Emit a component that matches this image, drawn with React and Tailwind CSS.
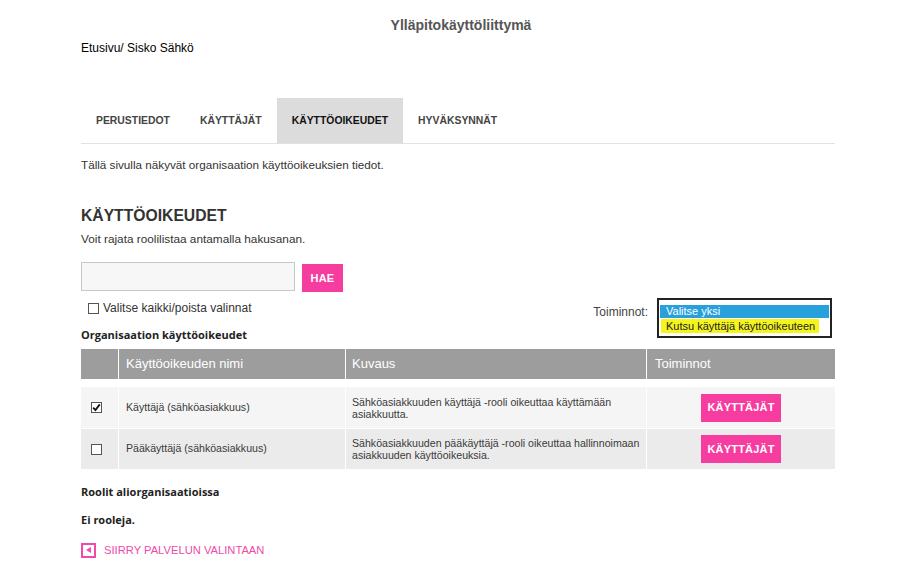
import React from "react";

const arial = { fontFamily: '"Liberation Sans", Arial, sans-serif' };
const open = { fontFamily: '"Open Sans", sans-serif' };

function PinkButton({ children, className = "" }) {
  return (
    <button
      className={`bg-[#f73c9f] text-white font-bold text-[11px] tracking-[0.2px] border-0 ${className}`}
    >
      {children}
    </button>
  );
}

function Checkbox({ checked }) {
  return (
    <span className="inline-flex w-[11px] h-[11px] border border-[#555] bg-white items-center justify-center">
      {checked && (
        <svg width="9" height="9" viewBox="0 0 9 9">
          <path d="M1.2 4.6 L3.4 7 L7.8 1.4" stroke="#111" strokeWidth="1.8" fill="none" />
        </svg>
      )}
    </span>
  );
}

export default function App() {
  const rows = [
    {
      checked: true,
      name: "Käyttäjä (sähköasiakkuus)",
      desc: ["Sähköasiakkuuden käyttäjä -rooli oikeuttaa käyttämään", "asiakkuutta."],
      bg: "bg-[#f5f5f5]",
    },
    {
      checked: false,
      name: "Pääkäyttäjä (sähköasiakkuus)",
      desc: ["Sähköasiakkuuden pääkäyttäjä -rooli oikeuttaa hallinnoimaan", "asiakkuuden käyttöoikeuksia."],
      bg: "bg-[#ebebeb]",
    },
  ];
  return (
    <div className="w-[900px] h-[566px] bg-white text-[#333] overflow-hidden" style={arial}>
      <div className="pl-[81px] pr-[65px]">
        <div className="text-center pt-[17px] text-[14px] font-bold text-[#555] leading-[16px]">
          <span className="relative left-[3px]">Ylläpitokäyttöliittymä</span>
        </div>
        <div className="mt-[8px] text-[12px] text-black leading-[14px]">Etusivu/ Sisko Sähkö</div>

        <div className="mt-[43px] flex border-b border-[#e2e2e2] h-[46px]">
          {["PERUSTIEDOT", "KÄYTTÄJÄT", "KÄYTTÖOIKEUDET", "HYVÄKSYNNÄT"].map((t, i) => (
            <div
              key={t}
              className={`px-[15px] flex items-center text-[10.4px] font-bold ${
                i === 2 ? "bg-[#dcdcdc] text-[#111]" : "text-[#444]"
              }`}
            >
              {t}
            </div>
          ))}
        </div>

        <div className="mt-[14px] text-[11.7px] leading-[14px] text-[#333]">
          Tällä sivulla näkyvät organisaation käyttöoikeuksien tiedot.
        </div>

        <h1 className="mt-[34px] text-[15.7px] font-bold text-[#333] leading-[20px]">KÄYTTÖOIKEUDET</h1>
        <div className="mt-[6px] text-[11.8px] leading-[14px] text-[#333]">Voit rajata roolilistaa antamalla hakusanan.</div>

        <div className="mt-[16px] flex items-start gap-[7px]">
          <input className="w-[214px] h-[29px] border border-[#c8c8c8] bg-[#f7f7f7] outline-none" />
          <PinkButton className="w-[41px] h-[28px] mt-[2px]">HAE</PinkButton>
        </div>

        <div className="flex justify-between items-start">
          <div className="mt-[9px] ml-[7px] flex items-center gap-[4px] text-[12px] leading-[14px] text-[#333]">
            <Checkbox />
            <span>Valitse kaikki/poista valinnat</span>
          </div>
          <div className="flex items-start mt-[6px] mr-[3px]">
            <span className="text-[12px] text-[#444] mt-[7px] mr-[9px] leading-[14px]">Toiminnot:</span>
            <div className="w-[175px] h-[40px] border-2 border-[#222] bg-white pt-[5px] px-[1px] text-[11px] leading-[13px] whitespace-nowrap">
              <div className="bg-[#27a0dc] text-white pl-[6px]">Valitse yksi</div>
              <div className="mt-[1px] ml-[1px] inline-block bg-[#f5f51e] text-[#222] pl-[5px] pr-[4px] leading-[14px]">
                Kutsu käyttäjä käyttöoikeuteen
              </div>
            </div>
          </div>
        </div>

        <div className="mt-[-10px] text-[11px] font-bold leading-[14px] text-[#222]" style={open}>
          Organisaation käyttöoikeudet
        </div>

        <div className="mt-[7px] w-[754px] text-[13px]">
          <div className="flex h-[30px] bg-[#9d9d9d] text-white">
            <div className="w-[38px] border-r border-white"></div>
            <div className="w-[227px] border-r border-white flex items-center pl-[7px]">Käyttöoikeuden nimi</div>
            <div className="w-[301px] border-r border-white flex items-center pl-[6px]">Kuvaus</div>
            <div className="flex-1 flex items-center pl-[8px]">Toiminnot</div>
          </div>
          <div className="mt-[8px]">
            {rows.map((r, i) => (
              <div key={i} className={`flex h-[41px] ${r.bg} ${i === 1 ? "border-t border-white" : ""} text-[10.6px] text-[#3a3a3a]`}>
                <div className="w-[38px] border-r border-white flex items-center pl-[10px]">
                  <Checkbox checked={r.checked} />
                </div>
                <div className="w-[227px] border-r border-white flex items-center pl-[7px]">{r.name}</div>
                <div className="w-[301px] border-r border-white flex flex-col justify-center pl-[6px] leading-[12px] whitespace-nowrap">
                  <div>{r.desc[0]}</div>
                  <div>{r.desc[1]}</div>
                </div>
                <div className="flex-1 flex items-center justify-center">
                  <PinkButton className="w-[80px] h-[28px]">KÄYTTÄJÄT</PinkButton>
                </div>
              </div>
            ))}
          </div>
        </div>

        <div className="mt-[16px] text-[11px] font-bold leading-[14px] text-[#222]" style={open}>
          Roolit aliorganisaatioissa
        </div>
        <div className="mt-[14px] text-[11px] font-bold leading-[14px] text-[#222]" style={open}>
          Ei rooleja.
        </div>
        <div className="mt-[15px] flex items-center gap-[8px] text-[#f04ba8] text-[11.2px]">
          <span className="w-[15px] h-[15px] border-2 border-[#f04ba8] flex items-center justify-center">
            <svg width="5" height="6" viewBox="0 0 5 6">
              <path d="M5 0 L0 3 L5 6 Z" fill="#f04ba8" />
            </svg>
          </span>
          <span>SIIRRY PALVELUN VALINTAAN</span>
        </div>
      </div>
    </div>
  );
}
